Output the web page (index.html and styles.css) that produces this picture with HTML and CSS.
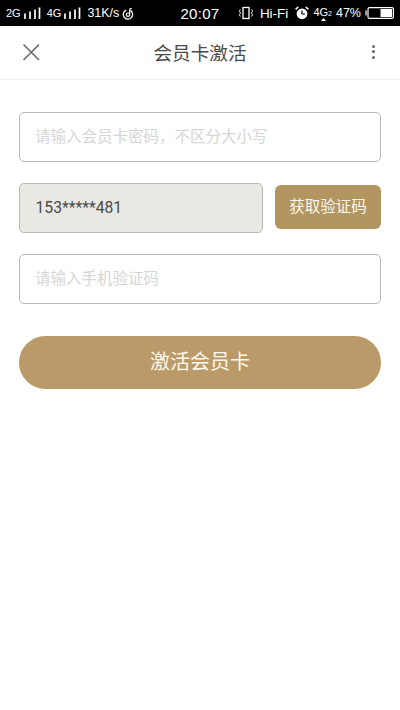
FILE: index.html
```html
<!DOCTYPE html>
<html lang="zh-CN">
<head>
<meta charset="utf-8">
<title>会员卡激活</title>
<link rel="stylesheet" href="styles.css">
</head>
<body>
<div class="status">
  <div class="status-left">
    <span class="net">2G</span>
    <svg class="bars" width="17" height="13" viewBox="0 0 17 13"><path d="M1 6.500V12M6 4.500V12M11 2.500V12M15.500 .5V12" stroke="#fff" stroke-width="1.700"/></svg>
    <span class="net net-second">4G</span>
    <svg class="bars" width="17" height="13" viewBox="0 0 17 13"><path d="M1 6.500V12M6 4.500V12M11 2.500V12M15.500 .5V12" stroke="#fff" stroke-width="1.700"/></svg>
    <span class="speed">31K/s</span>
    <svg class="swirl" width="12" height="13" viewBox="0 0 12 13"><path d="M4.200 3.100A4.700 4.700 0 1 0 8.300 3.400" fill="none" stroke="#fff" stroke-width="1.300"/><circle cx="6" cy="7.700" r="1.700" fill="none" stroke="#fff" stroke-width="1.200"/><path d="M7.700 7.700V3 Q7.700 1.300 9.800 1.500" fill="none" stroke="#fff" stroke-width="1.200"/></svg>
  </div>
  <div class="status-time">20:07</div>
  <div class="status-right">
    <svg class="vibrate" width="14" height="14" viewBox="0 0 14 14"><rect x="4" y="1.500" width="6" height="11" fill="none" stroke="#fff" stroke-width="1.300"/><path d="M1.200 3.500 .4 5.500 1.600 7 .4 8.500 1.200 10.500M12.800 3.500 13.600 5.500 12.400 7 13.600 8.500 12.800 10.500" fill="none" stroke="#fff"/></svg>
    <span class="hifi">Hi-Fi</span>
    <svg class="alarm" width="14" height="14" viewBox="0 0 14 14"><circle cx="7" cy="7.800" r="5.400" fill="#fff"/><path d="M7 4.500V8H10" fill="none" stroke="#000" stroke-width="1.200"/><path d="M.6 3.300 3.200 1M13.400 3.300 10.800 1" stroke="#fff" stroke-width="1.600"/></svg>
    <span class="g4">4G<small>2</small><svg class="g4-arrow" width="5" height="3" viewBox="0 0 5 3"><path d="M2.500 0 5 3H0Z" fill="#fff"/></svg></span>
    <span class="pct">47%</span>
    <svg class="battery" width="29" height="12" viewBox="0 0 29 12"><path d="M1 3.500V8.500" stroke="#fff" stroke-width="1.200"/><rect x="3" y=".6" width="25.400" height="10.800" rx="1.500" fill="none" stroke="#fff" stroke-width="1.200"/><rect x="15.500" y="2" width="11.500" height="8" fill="#fff"/></svg>
  </div>
</div>

<header class="topbar">
  <div class="topbar-side">
    <svg class="close" width="18" height="18" viewBox="0 0 18 18"><path d="M1.500 1.500 17 17M17 1.500 1.500 17" stroke="#6b6b6b" stroke-width="1.600"/></svg>
  </div>
  <h1 class="title">会员卡激活</h1>
  <div class="topbar-side topbar-end">
    <div class="more"><i></i><i></i><i></i></div>
  </div>
</header>

<main class="form">
  <div class="field placeholder">请输入会员卡密码，不区分大小写</div>
  <div class="row">
    <div class="field phone">153*****481</div>
    <button class="code-btn">获取验证码</button>
  </div>
  <div class="field placeholder">请输入手机验证码</div>
  <button class="submit">激活会员卡</button>
</main>
</body>
</html>
```
FILE: styles.css
```css
* { box-sizing: border-box; }
html, body { margin: 0; height: 100%; }
body {
  background: #fff;
  font-family: "Noto Sans CJK SC", "Liberation Sans", sans-serif;
  color: #333;
  overflow: hidden;
}
.status {
  height: 26px;
  background: #000;
  color: #fff;
  display: flex;
  align-items: center;
  padding: 0 6px;
  font-family: "Liberation Sans", "Noto Sans CJK SC", sans-serif;
}
.status-left, .status-right {
  flex: 1 1 0;
  display: flex;
  align-items: center;
  min-width: 0;
  white-space: nowrap;
}
.status-right { justify-content: flex-end; }
.status-time {
  font-size: 15px;
  letter-spacing: .3px;
  width: 40px;
  white-space: nowrap;
  display: flex;
  justify-content: center;
}
.net { font-size: 11px; }
.bars { margin-left: 3px; }
.net-second { margin-left: 6px; }
.speed { font-size: 12.500px; margin-left: 6px; }
.swirl { margin-left: 3px; }
.vibrate { margin-right: 7px; }
.hifi { font-size: 13.500px; margin-right: 7px; }
.alarm { margin-right: 4px; }
.g4 { font-size: 11px; margin-right: 4px; position: relative; top: -1px; }
.g4 small { font-size: 7px; }
.g4-arrow { position: absolute; left: 8px; bottom: -3px; }
.pct { font-size: 12.500px; margin-right: 4px; }
.topbar {
  height: 54px;
  display: grid;
  grid-template-columns: 1fr auto 1fr;
  align-items: center;
  padding: 0 22px 2px;
  border-bottom: 1px solid #f1f1f1;
}
.topbar-side { display: flex; }
.topbar-end { justify-content: flex-end; }
.close { display: block; }
.title {
  margin: 0;
  font-size: 18.600px;
  font-weight: 400;
  color: #4a4a4a;
}
.more { display: flex; flex-direction: column; gap: 2.500px; width: 3px; margin-right: 3px; }
.more i { display: block; width: 3px; height: 3px; border-radius: 50%; background: #666; }
.form {
  padding: 32px 19px 0;
  display: flex;
  flex-direction: column;
}
.field {
  height: 50px;
  border: 1px solid #b9b9b9;
  border-radius: 5px;
  display: flex;
  align-items: center;
  padding: 0 0 4px 15px;
  font-size: 15.500px;
  background: #fff;
  white-space: nowrap;
}
.placeholder { color: #d6d6d6; }
.row {
  display: flex;
  align-items: flex-start;
  gap: 12px;
  margin: 21px 0;
}
.phone {
  flex: 0 0 244px;
  background: #e9e8e2;
  color: #4a4a4a;
  font-family: "Roboto", "Liberation Sans", sans-serif;
  font-size: 15.700px;
  padding: 0 0 1px 15.500px;
}
.code-btn {
  flex: 1;
  height: 44px;
  margin-top: 2px;
  border: 0;
  border-radius: 6px;
  background: #b2955f;
  color: #fdf8ee;
  font: inherit;
  font-size: 15.500px;
  padding: 0 0 4px;
}
.submit {
  height: 53px;
  margin-top: 32px;
  border: 0;
  border-radius: 27px;
  background: #ba9a68;
  color: #fdf8ee;
  font: inherit;
  font-size: 20px;
  padding: 0 0 4px;
}
```
